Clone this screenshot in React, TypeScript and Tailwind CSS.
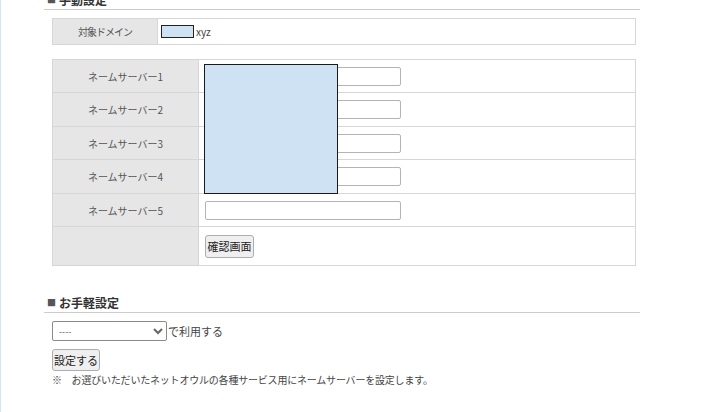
const servers = [
  { label: "ネームサーバー1", h: "h-[32px]" },
  { label: "ネームサーバー2", h: "h-[33px]" },
  { label: "ネームサーバー3", h: "h-[32px]" },
  { label: "ネームサーバー4", h: "h-[33px]" },
  { label: "ネームサーバー5", h: "h-[32px]" },
];

const font = "font-['Noto_Sans_CJK_JP','Noto_Sans',sans-serif]";

const SectionTitle = ({ title, className }: { title: string; className: string }) => (
  <div className={`${className} box-border flex h-[20px] items-center border-b border-[#cccccc] pl-[3px] text-[12px] font-bold leading-[16px] text-[#333]`}>
    <span className="mr-[3px] text-[9px] leading-[16px] text-[#555]">■</span>
    {title}
  </div>
);

export default function App() {
  return (
    <div className={`${font} relative min-h-[412px] w-full overflow-hidden border-l border-[#cfe6ee] bg-white text-[#333]`}>
      <div className="ml-[43px] w-[596px]">
        {/* 手動設定 */}
        <SectionTitle title="手動設定" className="-mt-[10px]" />

        <div className="ml-[8px] mt-[8px] flex h-[27px] w-[584px] border border-[#d6d6d6]">
          <div className="flex w-[105px] items-center justify-center border-r border-[#d6d6d6] bg-[#e6e6e6] text-[10px] tracking-[-1px] text-[#555]">
            対象ドメイン
          </div>
          <div className="flex items-center pl-[3px] text-[10px] text-[#444]">
            <span className="mr-[2px] inline-block h-[13px] w-[33px] border border-[#222] bg-[#cfe2f3]" />
            xyz
          </div>
        </div>

        {/* nameservers */}
        <div className="relative ml-[8px] mt-[14px] w-[584px] border border-[#d6d6d6]">
          {servers.map((s) => (
            <div key={s.label} className={`flex ${s.h} box-content border-b border-[#d6d6d6]`}>
              <div className="flex w-[146px] items-center justify-center border-r border-[#d6d6d6] bg-[#e6e6e6] text-[10px] text-[#555]">
                {s.label}
              </div>
              <div className="flex items-center pl-[6px]">
                <input
                  type="text"
                  className="h-[19px] w-[196px] rounded-[2px] border border-[#b4b4b4] bg-white"
                />
              </div>
            </div>
          ))}
          <div className="flex h-[38px]">
            <div className="w-[146px] border-r border-[#d6d6d6] bg-[#e6e6e6]" />
            <div className="flex items-center pl-[6px]">
              <button className="h-[23px] w-[49px] rounded-[3px] border border-[#adadad] bg-[#efefef] text-[11px] text-[#222]">
                確認画面
              </button>
            </div>
          </div>
          {/* redaction box */}
          <div className="absolute left-[151px] top-[4px] h-[130px] w-[134px] border border-[#1a1a1a] bg-[#cfe2f3]" />
        </div>

        {/* お手軽設定 */}
        <SectionTitle title="お手軽設定" className="mt-[27px]" />

        <div className="ml-[8px] mt-[8px] flex items-center text-[11px] text-[#444]">
          <select className="h-[20px] w-[115px] rounded-[2px] border border-[#8a8a8a] bg-white pl-[2px] text-[9px] text-[#666]">
            <option>----</option>
          </select>
          <span className="ml-[1px]">で利用する</span>
        </div>

        <div className="ml-[8px] mt-[5px]">
          <button className="h-[22px] w-[48px] rounded-[3px] border border-[#adadad] bg-[#efefef] text-[11px] text-[#222]">
            設定する
          </button>
        </div>

        <p className="ml-[8px] mt-[2px] text-[10px] leading-[14px] tracking-[-0.2px] text-[#444]">
          ※　お選びいただいたネットオウルの各種サービス用にネームサーバーを設定します。
        </p>
      </div>
    </div>
  );
}
